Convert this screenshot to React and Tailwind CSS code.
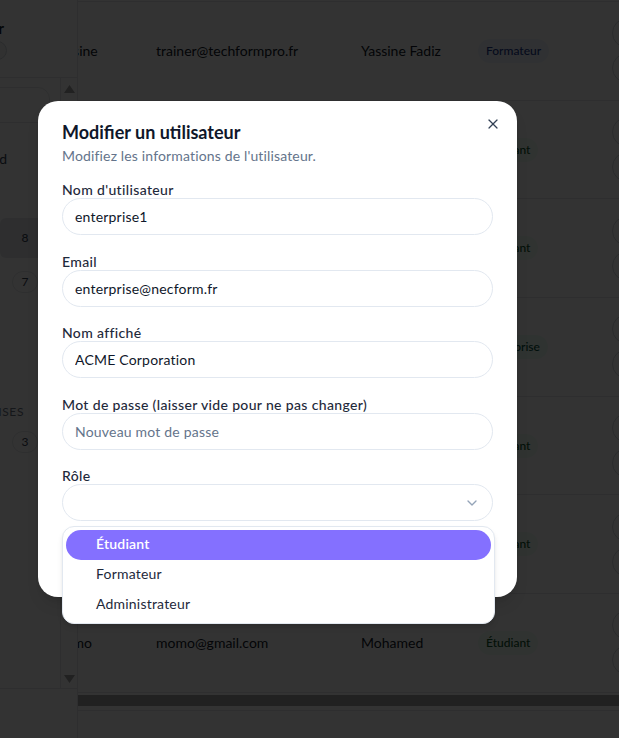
import { ChevronDown, X } from 'lucide-react';

const rows = [
  { user: 'yassine', email: 'trainer@techformpro.fr', name: 'Yassine Fadiz', role: 'Formateur' },
  { user: 'etudiant1', email: 'etudiant1@necform.fr', name: 'Lucas Martin', role: 'Étudiant' },
  { user: 'etudiant2', email: 'etudiant2@necform.fr', name: 'Sarah Benali', role: 'Étudiant' },
  { user: 'enterprise1', email: 'enterprise@necform.fr', name: 'ACME Corporation', role: 'Entreprise' },
  { user: 'etudiant3', email: 'etudiant3@necform.fr', name: 'Julie Moreau', role: 'Étudiant' },
  { user: 'etudiant4', email: 'etudiant4@necform.fr', name: 'Karim Haddad', role: 'Étudiant' },
  { user: 'momo', email: 'momo@gmail.com', name: 'Mohamed', role: 'Étudiant' },
];

const badgeColors = {
  Formateur: 'bg-blue-50 text-blue-900',
  'Étudiant': 'bg-green-50 text-green-900',
  Entreprise: 'bg-emerald-50 text-emerald-900',
};

function Field({ label, value, placeholder }) {
  return (
    <div>
      <label className="block text-[14px] leading-[17px] tracking-[0.35px] font-medium text-[#1e293b]">{label}</label>
      <input
        readOnly
        value={value}
        placeholder={placeholder}
        className="block w-full h-[37px] rounded-full border border-[#e2e8f0] px-3 text-[14px] tracking-[0.2px] text-[#0f172a] placeholder:text-[#64748b] outline-none"
      />
    </div>
  );
}

function Sidebar() {
  return (
    <aside className="w-[78px] shrink-0 border-r border-gray-200 flex flex-col">
      <div className="h-[78px] border-b border-gray-200 flex flex-col items-end justify-center pr-[73px] whitespace-nowrap">
        <span className="text-[15px] font-semibold text-gray-900 leading-[20px]">Utilisateur</span>
        <span className="mt-[3px] -mr-[3px] h-[19px] w-[44px] rounded-full border border-gray-300 bg-gray-100" />
      </div>
      <div className="flex-1 flex min-h-0">
        <div className="flex-1 overflow-hidden whitespace-nowrap">
          <div className="mt-[9px] ml-auto mr-[10px] h-[36px] w-[200px] rounded-[12px] border border-gray-200 float-right" />
          <div className="clear-both h-[15px]" />
          <div className="flex h-10 items-center justify-end pr-[53px] text-[14px] text-gray-700">Tableau de bord</div>
          <div className="h-10" />
          <div className="flex h-10 items-center justify-end mr-[8px] pr-[14px] rounded-md bg-gray-200">
            <span className="w-[26px] text-center text-[12px] font-medium text-gray-700">8</span>
          </div>
          <div className="mt-1 flex h-10 items-center justify-end mr-[8px] pr-[14px]">
            <span className="w-[26px] h-[22px] flex items-center justify-center rounded-full border border-gray-200 text-[12px] text-gray-700">7</span>
          </div>
          <div className="h-[100px]" />
          <div className="flex h-5 items-center justify-end pr-[36px] text-[12px] uppercase tracking-wider text-gray-500">Entreprises</div>
          <div className="flex h-10 items-center justify-end mr-[8px] pr-[14px]">
            <span className="w-[26px] h-[22px] flex items-center justify-center rounded-full border border-gray-200 text-[12px] text-gray-700">3</span>
          </div>
        </div>
        <div className="w-[17px] border-l border-gray-200 flex flex-col items-center justify-between pt-[7px] pb-[5px]">
          <svg width="11" height="8" viewBox="0 0 11 8"><path d="M5.5 0 L11 8 L0 8 Z" fill="#a3a3a3" /></svg>
          <svg width="11" height="8" viewBox="0 0 11 8"><path d="M0 0 L11 0 L5.5 8 Z" fill="#a3a3a3" /></svg>
        </div>
      </div>
      <div className="h-[50px] border-t border-gray-200" />
    </aside>
  );
}

function Table() {
  return (
    <main className="flex-1 min-w-0 flex flex-col overflow-hidden">
      <div className="h-[2px] border-b border-gray-200" />
      {rows.map((r) => (
        <div key={r.user} className="h-[98.7px] shrink-0 border-b border-gray-200 flex items-center whitespace-nowrap text-[14px] text-gray-900">
          <div className="ml-[-25px] w-[103px] shrink-0">{r.user}</div>
          <div className="w-[205px] shrink-0">{r.email}</div>
          <div className="w-[117px] shrink-0">{r.name}</div>
          <div className="w-[134px] shrink-0">
            <span className={`inline-block rounded-full px-2 py-[3px] text-[12px] font-medium ${badgeColors[r.role]}`}>{r.role}</span>
          </div>
          <div className="shrink-0 flex flex-col gap-[5px]">
            <span className="w-[30px] h-[30px] rounded-full border border-gray-300" />
            <span className="w-[30px] h-[30px] rounded-full border border-gray-300" />
          </div>
        </div>
      ))}
      <div className="mt-[2px] h-[16px] shrink-0 border-b border-gray-200">
        <div className="h-[11px] bg-[#a3a3a3]" />
      </div>
      <div className="flex-1" />
    </main>
  );
}

export default function App() {
  return (
    <div className="relative w-[619px] h-[738px] overflow-hidden bg-white" style={{ fontFamily: 'Lato, "Noto Sans", sans-serif' }}>
      <div className="flex h-full">
        <Sidebar />
        <Table />
      </div>

      <div className="absolute inset-0 bg-black/80" />

      <div className="absolute left-[38px] top-[101px] w-[479px] h-[496px] rounded-[20px] bg-white px-6 pt-[19px] shadow-lg">
        <button className="absolute right-[16px] top-[15px] text-[#334155]">
          <X size={16} strokeWidth={1.8} />
        </button>
        <h2 className="text-[18px] leading-[24px] font-bold text-[#0f172a]">Modifier un utilisateur</h2>
        <p className="mt-[2px] text-[14px] leading-[20px] tracking-[0.15px] text-[#64748b]">Modifiez les informations de l'utilisateur.</p>
        <div className="mt-[15px] flex flex-col gap-[17.5px]">
          <Field label="Nom d'utilisateur" value="enterprise1" />
          <Field label="Email" value="enterprise@necform.fr" />
          <Field label="Nom affiché" value="ACME Corporation" />
          <Field label="Mot de passe (laisser vide pour ne pas changer)" value="" placeholder="Nouveau mot de passe" />
          <div>
            <label className="block text-[14px] leading-[17px] tracking-[0.35px] font-medium text-[#1e293b]">Rôle</label>
            <div className="flex h-[37px] items-center justify-end rounded-full border border-[#e2e8f0] px-3">
              <ChevronDown size={16} className="text-[#94a3b8]" />
            </div>
          </div>
        </div>
      </div>

      <div className="absolute left-[62px] top-[526px] w-[433px] h-[98px] rounded-[12px] border border-[#e2e8f0] bg-white px-[3px] pt-[3px] shadow-md">
        <div className="flex h-[30px] items-center rounded-full bg-[#8470ff] pl-[30px] pb-[3px] text-[14px] font-semibold tracking-[0.2px] text-white">Étudiant</div>
        <div className="flex h-[30px] items-center pl-[30px] pb-[3px] text-[14px] tracking-[0.2px] text-[#1e293b]">Formateur</div>
        <div className="flex h-[30px] items-center pl-[30px] pb-[3px] text-[14px] tracking-[0.2px] text-[#1e293b]">Administrateur</div>
      </div>
    </div>
  );
}
